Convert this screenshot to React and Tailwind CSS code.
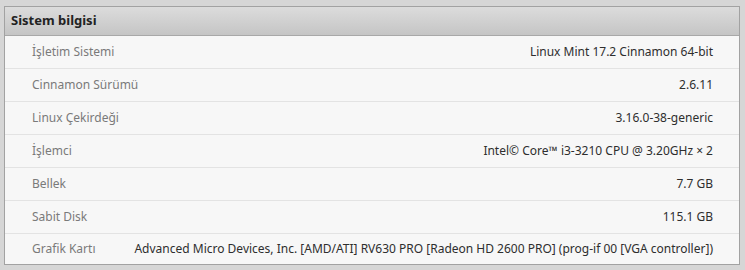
import React from 'react';

const rows = [
  ['İşletim Sistemi', 'Linux Mint 17.2 Cinnamon 64-bit'],
  ['Cinnamon Sürümü', '2.6.11'],
  ['Linux Çekirdeği', '3.16.0-38-generic'],
  ['İşlemci', 'Intel© Core™ i3-3210 CPU @ 3.20GHz × 2'],
  ['Bellek', '7.7 GB'],
  ['Sabit Disk', '115.1 GB'],
  ['Grafik Kartı', 'Advanced Micro Devices, Inc. [AMD/ATI] RV630 PRO [Radeon HD 2600 PRO] (prog-if 00 [VGA controller])'],
];

export default function App() {
  return (
    <div className="w-[745px] h-[270px] bg-[#d6d6d6] pt-[6px] pl-[4px] font-['Noto_Sans',sans-serif] text-[12px]">
      <div className="w-[736px] border border-[#a2a2a2] bg-[#f7f7f7]">
        <div className="h-[29px] flex items-center px-[6px] border-b border-[#a8a8a8] bg-gradient-to-b from-[#dcdcdc] to-[#c5c5c5] font-bold text-[13px] text-[#222]">
          Sistem bilgisi
        </div>
        {rows.map(([label, value], i) => (
          <div
            key={label}
            className={`flex items-center justify-between whitespace-nowrap pl-[27px] pr-[26px] ${i < rows.length - 1 ? 'h-[33px] border-b border-[#e3e3e3]' : 'h-[30px]'}`}
          >
            <span className="text-[#7a7a7a]">{label}</span>
            <span className="text-[#2e2e2e]">{value}</span>
          </div>
        ))}
      </div>
    </div>
  );
}
